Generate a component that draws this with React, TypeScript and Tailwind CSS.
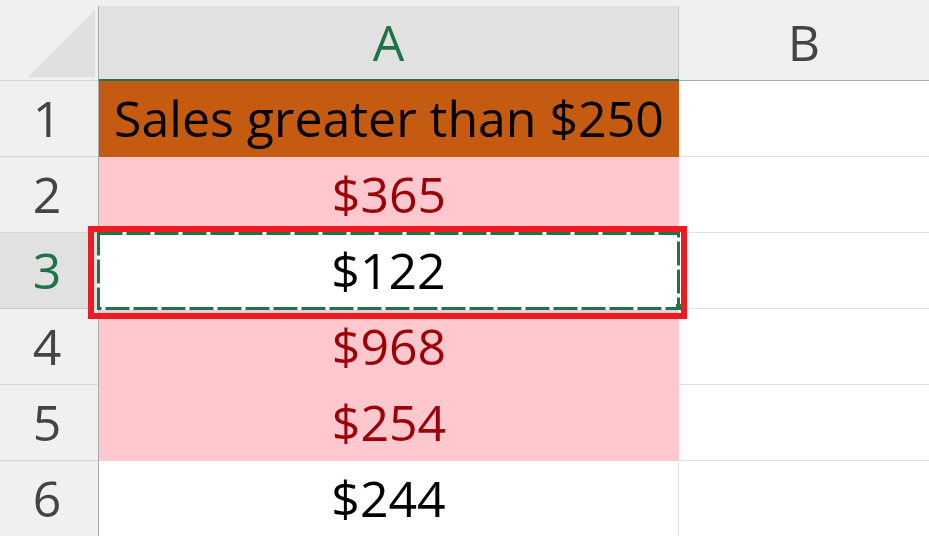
import React from "react";

type Row = {
  n: number;
  text: string;
  kind: "orange" | "pink" | "white";
  selected?: boolean;
};

const rows: Row[] = [
  { n: 1, text: "Sales greater than $250", kind: "orange" },
  { n: 2, text: "$365", kind: "pink" },
  { n: 3, text: "$122", kind: "white", selected: true },
  { n: 4, text: "$968", kind: "pink" },
  { n: 5, text: "$254", kind: "pink" },
  { n: 6, text: "$244", kind: "white" },
];

function CellA({ row }: { row: Row }) {
  if (row.kind === "orange") {
    return (
      <div className="w-[580px] h-full bg-[#c55a11] text-black flex items-center justify-center leading-none pb-[2px]">
        {row.text}
      </div>
    );
  }
  if (row.kind === "pink") {
    return (
      <div className="w-[580px] h-full bg-[#ffc7ce] text-[#9c0006] flex items-center justify-center leading-none pb-[2px]">
        {row.text}
      </div>
    );
  }
  return (
    <div className="w-[580px] h-full bg-white text-black border-b border-r border-[#e1e1e1] flex items-center justify-center leading-none pb-[2px]">
      {row.text}
    </div>
  );
}

export default function App() {
  return (
    <div className="relative w-[929px] h-[536px] overflow-hidden bg-white font-['Open_Sans',sans-serif] text-[50px]">
      {/* Header row */}
      <div className="flex h-[81px] bg-[#f0f0f0]">
        <div className="relative w-[98px] h-full border-b border-[#d6d6d6]">
          <svg className="absolute left-[28px] top-[10px]" width="67" height="67" viewBox="0 0 67 67">
            <polygon points="67,0 67,67 0,67" fill="#dfdfdf" />
          </svg>
        </div>
        <div className="flex flex-1 pt-[6px]">
          <div className="w-px h-full bg-[#ababab]" />
          <div className="w-[579px] h-full bg-[#e1e1e1] border-b-2 border-[#217346] flex items-center justify-center leading-none text-[#217346] pb-[2px]">
            A
          </div>
          <div className="w-px h-full bg-[#c4c4c4] border-b-2 border-[#217346]" />
          <div className="flex-1 h-full border-b border-[#ababab] flex items-center justify-center leading-none text-[#444444] pb-[2px]">
            B
          </div>
        </div>
      </div>

      {/* Body rows */}
      {rows.map((row) => (
        <div key={row.n} className="flex h-[76px]">
          <div
            className={
              row.selected
                ? "w-[98px] h-full bg-[#e1e1e1] border-b border-[#c8c8c8] text-[#217346] flex items-center justify-center leading-none pr-[4px] pb-[2px]"
                : "w-[98px] h-full bg-[#f0f0f0] border-b border-[#d6d6d6] text-[#444444] flex items-center justify-center leading-none pr-[4px] pb-[2px]"
            }
          >
            {row.n}
          </div>
          <div className="w-px h-full bg-[#ababab]" />
          <CellA row={row} />
          <div className="flex-1 h-full border-b border-[#e1e1e1]" />
        </div>
      ))}

      {/* Copy marquee around A3 */}
      <svg className="absolute left-[97px] top-[232px]" width="583" height="78" viewBox="0 0 583 78">
        <rect x="1.5" y="1.5" width="580" height="75" fill="none" stroke="#ffffff" strokeWidth="3" />
        <rect x="1.5" y="1.5" width="580" height="75" fill="none" stroke="#217346" strokeWidth="3" strokeDasharray="24 4" />
      </svg>
      <div className="absolute left-[676px] top-[304px] w-[6px] h-[6px] bg-[#217346]" />

      {/* Red highlight rectangle */}
      <div className="absolute left-[88px] top-[226px] w-[599px] h-[93px] border-[6px] border-[#ed1c24]" />
    </div>
  );
}
